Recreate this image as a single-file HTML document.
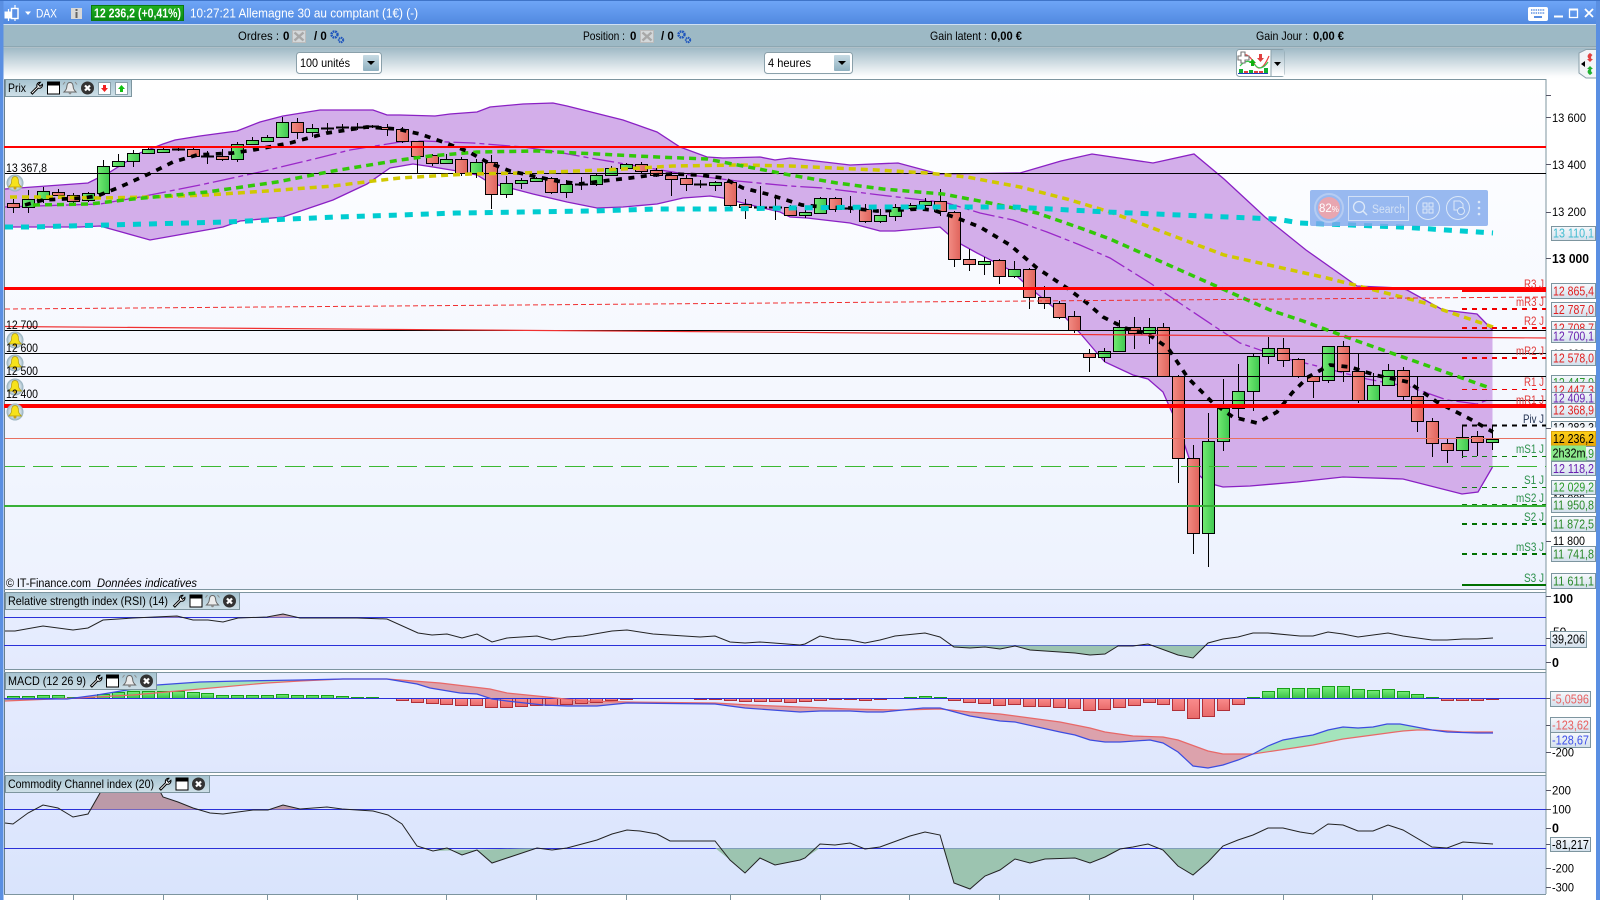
<!DOCTYPE html>
<html><head><meta charset="utf-8"><title>DAX</title>
<style>
html,body{margin:0;padding:0;background:#fff;width:1600px;height:900px;overflow:hidden}
svg{display:block;font-family:"Liberation Sans",sans-serif}
text{font-size:12px;fill:#000}
.c rect{width:12px;stroke:#000;stroke-width:1}
.h rect{width:12px;stroke-width:1}
.pl{stroke:#7d959f;stroke-width:1;fill:url(#lab)}
.r{fill:#e03838}.g{fill:#2a8f4a}
.v{font-size:12.5px}
</style></head><body>
<svg width="1600" height="900" viewBox="0 0 1600 900" xmlns="http://www.w3.org/2000/svg">
<defs>
<linearGradient id="hd" x1="0" y1="0" x2="0" y2="1"><stop offset="0" stop-color="#6fa6f8"/><stop offset="1" stop-color="#5088de"/></linearGradient>
<linearGradient id="tb" x1="0" y1="0" x2="0" y2="1"><stop offset="0" stop-color="#a0bac6"/><stop offset=".9" stop-color="#fbfcfd"/><stop offset="1" stop-color="#fff"/></linearGradient>
<linearGradient id="mn" x1="0" y1="0" x2="0" y2="1"><stop offset="0" stop-color="#fff"/><stop offset="1" stop-color="#edf2fe"/></linearGradient>
<linearGradient id="rs" x1="0" y1="0" x2="0" y2="1"><stop offset="0" stop-color="#e8eeff"/><stop offset="1" stop-color="#e3eafd"/></linearGradient>
<linearGradient id="mc" x1="0" y1="0" x2="0" y2="1"><stop offset="0" stop-color="#e6ecfe"/><stop offset="1" stop-color="#dfe7fd"/></linearGradient>
<linearGradient id="cc" x1="0" y1="0" x2="0" y2="1"><stop offset="0" stop-color="#e0e8fe"/><stop offset="1" stop-color="#d9e4fc"/></linearGradient>
<linearGradient id="gc"><stop offset="0" stop-color="#72ea72"/><stop offset="1" stop-color="#40c850"/></linearGradient>
<linearGradient id="rc"><stop offset="0" stop-color="#f28c84"/><stop offset="1" stop-color="#e0645c"/></linearGradient>
<linearGradient id="gb" x1="0" y1="0" x2="0" y2="1"><stop offset="0" stop-color="#78ee78"/><stop offset="1" stop-color="#38c048"/></linearGradient>
<linearGradient id="rb" x1="0" y1="0" x2="0" y2="1"><stop offset="0" stop-color="#fa8c8c"/><stop offset="1" stop-color="#e86a6a"/></linearGradient>
<linearGradient id="lab" x1="0" y1="0" x2="0" y2="1"><stop offset="0" stop-color="#f6f9fc"/><stop offset="1" stop-color="#d3e0ec"/></linearGradient>
<linearGradient id="bar" x1="0" y1="0" x2="0" y2="1"><stop offset="0" stop-color="#a6c3d0"/><stop offset="1" stop-color="#cfe0e8"/></linearGradient>
<linearGradient id="btn" x1="0" y1="0" x2="0" y2="1"><stop offset="0" stop-color="#c8dbe4"/><stop offset="1" stop-color="#8eb0c0"/></linearGradient>
<linearGradient id="yl" x1="0" y1="0" x2="0" y2="1"><stop offset="0" stop-color="#ffd21a"/><stop offset="1" stop-color="#e8a806"/></linearGradient>
<radialGradient id="bl"><stop offset="0" stop-color="#f4f8fa"/><stop offset=".7" stop-color="#c8d8e0"/><stop offset="1" stop-color="#90acba"/></radialGradient>
<linearGradient id="gr" x1="0" y1="0" x2="0" y2="1"><stop offset="0" stop-color="#22b022"/><stop offset="1" stop-color="#078a10"/></linearGradient>
<symbol id="bell" overflow="visible"><circle r="8.5" fill="url(#bl)"/><path d="M0-6.5C-3-6.5-3.5-3.5-3.5-1-3.5 1.5-5 2.5-6.5 4H6.5C5 2.5 3.5 1.5 3.5-1 3.5-3.5 3-6.5 0-6.5Z" fill="#f6e21a" stroke="#b09a10" stroke-width=".7"/><circle cy="5" r="1.5" fill="#c8a010"/></symbol>
<symbol id="w" overflow="visible"><path d="M1 11.2 7 5.2C6.3 3 7.8 .6 10.4 .8L8.4 3 10 4.8 12.4 2.8C12.8 5.4 10.6 7.4 8.2 6.6L2.4 12.6Z" fill="#fff" stroke="#000" stroke-width="1"/></symbol>
<symbol id="n" overflow="visible"><rect x=".5" y=".5" width="12" height="12" fill="#fff" stroke="#000"/><rect x="1" y="1" width="11" height="3" fill="#000"/></symbol>
<symbol id="k" overflow="visible"><path d="M6.5 1C3.5 1 3.5 4 3.2 6 3 8 2 9 .5 10.5H12.500C11 9 10 8 9.800 6 9.500 4 9.500 1 6.500 1Z" fill="#ececec" stroke="#666"/><circle cx="6.500" cy="11.500" r="1.300" fill="#888"/><path d="M-.5 3 1.500 .5M13.500 3 11.500 .5" stroke="#888" fill="none"/></symbol>
<symbol id="x" overflow="visible"><circle cx="6.5" cy="6.5" r="6.5" fill="#333"/><path d="M4 4 9 9M9 4 4 9" stroke="#fff" stroke-width="2.2"/></symbol>
<symbol id="gear" overflow="visible"><circle cx="4.5" cy="4.5" r="3" fill="none" stroke="#1f55bd" stroke-width="2.4" stroke-dasharray="1.7 .7"/><circle cx="11" cy="10" r="2.2" fill="none" stroke="#1f55bd" stroke-width="2" stroke-dasharray="1.4 .6"/></symbol>
<symbol id="o" overflow="visible"><rect width="13" height="12" fill="#d4d8da" stroke="#bbb"/><path d="M2 2 11 10M11 2 2 10" stroke="#a8a8a8" stroke-width="2.4"/></symbol>
<clipPath id="r1"><rect x="4" y="593" width="1542" height="24.5"/></clipPath>
<clipPath id="r2"><rect x="4" y="645.5" width="1542" height="24"/></clipPath>
<clipPath id="c1"><rect x="4" y="776" width="1542" height="33.5"/></clipPath>
<clipPath id="c2"><rect x="4" y="848.3" width="1542" height="46"/></clipPath>
</defs>

<rect width="1600" height="900" fill="#fff"/>
<rect width="1600" height="25" fill="url(#hd)"/>
<rect y="24" width="1600" height="1" fill="#cfe0f4"/>
<rect y="25" width="1600" height="22" fill="#9db9c5"/>
<rect y="46.5" width="1600" height="1" fill="#7d959f"/>
<rect y="47.5" width="1600" height="1" fill="#e2ecf0"/>
<rect y="48" width="1600" height="31" fill="url(#tb)"/>
<rect x="0" y="0" width="3.5" height="900" fill="#5a8fe2"/>
<rect x="1596" y="0" width="4" height="900" fill="#5a8fe2"/>
<rect x="0" y="0" width="1600" height="1" fill="#3f74c8"/>

<path d="M8.500 9V21M15 5V21" stroke="#fff" stroke-width="1.2" fill="none"/>
<rect x="4.500" y="11.500" width="7.500" height="7" fill="#fff"/>
<rect x="11.500" y="8.500" width="6.500" height="10" fill="#5a90e4" stroke="#fff" stroke-width="1.4"/>
<path d="M25 11.500H31L28 15Z" fill="#fff"/>
<text x="36" y="17.500" textLength="21" lengthAdjust="spacingAndGlyphs" style="fill:#fff;font-size:12px">DAX</text>
<rect x="71" y="8" width="11" height="11" fill="#d8d8d8"/>
<rect x="75.500" y="9" width="2" height="2" fill="#666"/><rect x="75.500" y="12" width="2" height="6" fill="#666"/>
<rect x="91.500" y="5.500" width="92" height="15" fill="url(#gr)" stroke="#0b7a10"/>
<text x="94" y="17.500" textLength="87" lengthAdjust="spacingAndGlyphs" style="fill:#fff;font-size:12.500px;font-weight:bold">12 236,2 (+0,41%)</text>
<text x="190" y="17.500" textLength="228" lengthAdjust="spacingAndGlyphs" style="fill:#fff;font-size:12.500px">10:27:21 Allemagne 30 au comptant (1€) (-)</text>
<rect x="1528" y="7" width="20" height="14" rx="2" fill="#fff"/>
<path d="M1531 10h14M1531 13h14" stroke="#5a8fe2" stroke-width="1.400" stroke-dasharray="1.400 .9"/><rect x="1534" y="16" width="8" height="2" fill="#5a8fe2"/>
<rect x="1554" y="15.500" width="9" height="2" fill="#fff"/>
<rect x="1569.500" y="9.500" width="8" height="8" fill="none" stroke="#fff" stroke-width="1.300"/><rect x="1569" y="8.500" width="9" height="2" fill="#fff"/>
<path d="M1585 9 1593 17M1593 9 1585 17" stroke="#fff" stroke-width="1.800"/>

<text x="238" y="40" textLength="41" lengthAdjust="spacingAndGlyphs">Ordres :</text><text x="283" y="40" style="font-weight:bold;font-size:11.500px">0</text>
<use href="#o" x="292.500" y="30.500"/><text x="314" y="40" style="font-weight:bold;font-size:11.500px">/ 0</text><use href="#gear" x="330" y="30"/>
<text x="583" y="40" textLength="42" lengthAdjust="spacingAndGlyphs">Position :</text><text x="630" y="40" style="font-weight:bold;font-size:11.500px">0</text>
<use href="#o" x="640.500" y="30.500"/><text x="661" y="40" style="font-weight:bold;font-size:11.500px">/ 0</text><use href="#gear" x="677" y="30"/>
<text x="930" y="40" textLength="57" lengthAdjust="spacingAndGlyphs">Gain latent :</text><text x="991" y="40" style="font-weight:bold;font-size:11.500px" textLength="31" lengthAdjust="spacingAndGlyphs">0,00 €</text>
<text x="1256" y="40" textLength="52" lengthAdjust="spacingAndGlyphs">Gain Jour :</text><text x="1313" y="40" style="font-weight:bold;font-size:11.500px" textLength="31" lengthAdjust="spacingAndGlyphs">0,00 €</text>

<rect x="296.500" y="52.500" width="85" height="21" rx="3" fill="#fff" stroke="#8aa0aa"/>
<text x="300" y="67" textLength="50" lengthAdjust="spacingAndGlyphs">100 unités</text>
<rect x="363" y="55" width="16" height="16" rx="1" fill="url(#btn)"/><path d="M367 61H375L371 65Z" fill="#000"/>
<rect x="764.500" y="52.500" width="88" height="21" rx="3" fill="#fff" stroke="#8aa0aa"/>
<text x="768" y="67" textLength="43" lengthAdjust="spacingAndGlyphs">4 heures</text>
<rect x="834" y="55" width="16" height="16" rx="1" fill="url(#btn)"/><path d="M838 61H846L842 65Z" fill="#000"/>

<rect x="1236.500" y="49.500" width="48" height="27" rx="3" fill="#fff" stroke="#8aa0aa"/>
<rect x="1271" y="50" width="13.500" height="26" fill="url(#tb)"/>
<path d="M1271 50V76" stroke="#8aa0aa"/>
<path d="M1274 62H1281L1277.500 66Z" fill="#000"/>
<path d="M1238 60C1245 50 1250 56 1254 63 1258 71 1263 70 1269 56" fill="none" stroke="#e84040" stroke-width="1.200"/>
<path d="M1240 66C1245 60 1250 60 1255 65 1259 70 1264 68 1268 62" fill="none" stroke="#3cc850" stroke-width="1.200"/>
<path d="M1241 52h4v4h4v4h-4v3h-4v-3h-3v-4h3z" fill="#fff" stroke="#777" stroke-width="1.100"/>
<path d="M1248 66h3v-3h-2l3.500-4 3.500 4h-2v3z" fill="#10b010"/><path d="M1259 54h3v4h2l-3.500 4-3.500-4h2z" fill="#e04040"/>
<path d="M1239 69h4v4h-4zM1249 70h4v3h-4zM1264 68h4v5h-4z" fill="#10b030"/><path d="M1244 71h4v2h-4zM1254 71h4v2h-4zM1259 71h4v2h-4z" fill="#e04040"/>
<path d="M1238 73.500H1268" stroke="#2040c0"/>
<path d="M1596 49.500H1586L1579 53V73L1586 78H1596" fill="#f2f5f7" stroke="#8aa0aa"/>
<path d="M1581 64l4-3v6Z" fill="#000"/>
<path d="M1590 53c-3 2-3 4-1 6l-2 0 3 3 3-3-1.500 0c-1-2 0-3 1-4" fill="#e04040"/><path d="M1590 75c-3-2-3-4-1-6l-2 0 3-3 3 3-1.500 0c-1 2 0 3 1 4" fill="#20b030"/>

<rect x="4" y="79" width="1542" height="510" fill="url(#mn)"/>
<rect x="4" y="593" width="1542" height="76" fill="url(#rs)"/>
<rect x="4" y="673" width="1542" height="99" fill="url(#mc)"/>
<rect x="4" y="776" width="1542" height="118" fill="url(#cc)"/>
<rect x="4" y="79" width="1" height="815" fill="#6a7f8a"/>
<path d="M4 79.500H1546V894M4 589.500H1546M4 592.500H1546M4 669.500H1546M4 672.500H1546M4 772.500H1546M4 775.500H1546M4 894.500H1546" fill="none" stroke="#7d959f"/>

<polygon fill="#d3aeea" stroke="none" points="5,189 88,183 110,172 140,153 163,144 175,140 200,136 237,131 260,122 283,116 320,110 373,110 387,115 400,115 435,116 450,114 477,112 490,107 523,104 553,103 567,106 583,110 623,120 657,132 680,147 707,157 723,158 760,157 775,160 790,158 850,165 898,163 939,174 1020,173 1061,161 1092,154 1153,163 1194,154 1224,179 1265,217 1306,250 1357,286 1400,288 1407,290 1443,310 1477,314 1492.500,330 1492.500,467 1478,492 1462,494 1403,479 1343,477 1297,482 1250,486 1223,487 1208,483 1193,470 1178,425 1170,408 1163,392 1148,379 1133,375 1105,362 1097,353 1080,333 1063,315 1030,288 1010,270 977,253 957,242 940,227 895,231 880,231 850,223 807,218 790,217 780,212 763,208 723,198 710,196 683,198 657,204 623,207 597,208 567,202 533,194 510,188 490,183 477,175 457,171 433,167 413,164 390,168 367,184 333,200 283,217 240,221 223,227 150,240 100,226 80,227 5,227"/>
<polyline fill="none" stroke="#8a20c4" stroke-width="1.300" points="5,189 88,183 110,172 140,153 163,144 175,140 200,136 237,131 260,122 283,116 320,110 373,110 387,115 400,115 435,116 450,114 477,112 490,107 523,104 553,103 567,106 583,110 623,120 657,132 680,147 707,157 723,158 760,157 775,160 790,158 850,165 898,163 939,174 1020,173 1061,161 1092,154 1153,163 1194,154 1224,179 1265,217 1306,250 1357,286 1400,288 1407,290 1443,310 1477,314 1492.500,330"/>
<polyline fill="none" stroke="#8a20c4" stroke-width="1.300" points="5,227 80,227 100,226 150,240 223,227 240,221 283,217 333,200 367,184 390,168 413,164 433,167 457,171 477,175 490,183 510,188 533,194 567,202 597,208 623,207 657,204 683,198 710,196 723,198 763,208 780,212 790,217 807,218 850,223 880,231 895,231 940,227 957,242 977,253 1010,270 1030,288 1063,315 1080,333 1097,353 1105,362 1133,375 1148,379 1163,392 1170,408 1178,425 1193,470 1208,483 1223,487 1250,486 1297,482 1343,477 1403,479 1462,494 1478,492 1492.500,467"/>
<polyline fill="none" stroke="#9a28c8" stroke-width="1.300" stroke-dasharray="22 4 5 4" points="5,207 100,204 140,197 200,185 260,172 310,160 350,150 400,142 423,141 473,143 523,147 557,152 590,158 643,167 690,175 737,181 790,186 823,188 880,195 923,200 947,203 980,213 1013,220 1047,232 1080,245 1110,258 1150,283 1190,310 1217,328 1240,343 1280,357 1313,365 1367,379 1410,387 1447,400 1477,404 1490,399"/>

<path stroke="#000" fill="none" d="M13.500 199V213M28.500 190V213M43.500 187V203M58.500 189V199M73.500 193V203M88.500 192V202M103.500 160V194M118.500 154V167M133.500 150V167M148.500 147V153M163.500 147V152M178.500 148V151M193.500 147V157M207.500 151V164M222.500 149V161M237.500 142V162M252.500 137V144M267.500 135V142M282.500 117V138M297.500 118V139M312.500 124V137M327.500 123V133M342.500 124V132M357.500 123V130M372.500 125V128M387.500 124V136M402.500 127V143M417.500 141V173M432.500 154V166M446.500 154V164M461.500 157V176M476.500 159V178M491.500 155V209M506.500 176V198M521.500 178V189M536.500 177V182M551.500 177V194M566.500 180V198M581.500 177V190M596.500 174V186M611.500 166V176M626.500 163V169M641.500 162V173M656.500 168V177M671.500 172V196M686.500 175V191M700.500 180V188M715.500 181V191M730.500 181V209M745.500 199V219M760.500 186V208M775.500 195V220M790.500 205V216M805.500 210V218M820.500 197V213M835.500 197V212M850.500 196V213M865.500 204V223M880.500 209V223M895.500 204V221M910.500 203V210M925.500 198V210M940.500 189V216M954.500 211V267M969.500 249V271M984.500 257V275M999.500 259V284M1014.500 261V278M1029.500 268V309M1044.500 286V309M1059.500 301V319M1074.500 311V333M1089.500 349V372M1104.500 348V362M1119.500 320V352M1134.500 317V349M1149.500 318V344M1163.500 323V376M1178.500 375V483M1193.500 445V554M1208.500 413V567M1223.500 379V451M1238.500 364V418M1253.500 353V411M1268.500 337V364M1283.500 338V367M1298.500 358V378M1313.500 376V398M1328.500 346V383M1343.500 341V382M1358.500 353V403M1373.500 373V400M1388.500 364V385M1403.500 367V400M1417.500 377V432M1432.500 418V457M1447.500 439V463M1462.500 426V458M1477.500 431V456M1492.500 425V450"/>
<path stroke="#000" stroke-width="2" fill="none" d="M172 149.500h13M201 156.500h13M321 128.500h13M336 127.500h13M351 127.500h13M366 126.500h13M575 184.500h13M694 184.500h13M754 207.500h13M769 207.500h13M844 208.500h13"/>

<g class="c" fill="url(#gc)">
<rect x="22.500" y="199.500" height="8"/><rect x="37.500" y="191.500" height="8"/><rect x="82.500" y="193.500" height="7"/><rect x="97.500" y="166.500" height="27"/><rect x="112.500" y="161.500" height="5"/><rect x="127.500" y="153.500" height="8"/><rect x="142.500" y="149.500" height="4"/><rect x="157.500" y="149.500" height="3"/><rect x="231.500" y="144.500" height="15"/><rect x="246.500" y="140.500" height="4"/><rect x="261.500" y="137.500" height="4"/><rect x="276.500" y="122.500" height="15"/><rect x="306.500" y="128.500" height="4"/><rect x="440.500" y="159.500" height="4"/><rect x="470.500" y="162.500" height="11"/><rect x="500.500" y="183.500" height="11"/><rect x="515.500" y="180.500" height="3"/><rect x="530.500" y="178.500" height="3"/><rect x="560.500" y="184.500" height="8"/><rect x="590.500" y="175.500" height="9"/><rect x="605.500" y="168.500" height="7"/><rect x="620.500" y="164.500" height="4"/><rect x="709.500" y="182.500" height="3"/><rect x="799.500" y="212.500" height="3"/><rect x="814.500" y="198.500" height="15"/><rect x="874.500" y="215.500" height="6"/><rect x="889.500" y="207.500" height="9"/><rect x="904.500" y="205.500" height="3"/><rect x="919.500" y="201.500" height="4"/><rect x="978.500" y="261.500" height="3"/><rect x="1008.500" y="269.500" height="7"/><rect x="1098.500" y="351.500" height="6"/><rect x="1113.500" y="327.500" height="24"/><rect x="1143.500" y="327.500" height="6"/><rect x="1202.500" y="441.500" height="92"/><rect x="1217.500" y="408.500" height="33"/><rect x="1232.500" y="391.500" height="17"/><rect x="1247.500" y="356.500" height="35"/><rect x="1262.500" y="348.500" height="8"/><rect x="1322.500" y="346.500" height="34"/><rect x="1367.500" y="385.500" height="15"/><rect x="1382.500" y="370.500" height="15"/><rect x="1456.500" y="437.500" height="13"/><rect x="1486.500" y="439.500" height="3"/>
</g>
<g class="c" fill="url(#rc)">
<rect x="7.500" y="203.500" height="4"/><rect x="52.500" y="192.500" height="3"/><rect x="67.500" y="195.500" height="6"/><rect x="187.500" y="149.500" height="7"/><rect x="216.500" y="156.500" height="3"/><rect x="291.500" y="122.500" height="10"/><rect x="381.500" y="127.500" height="2"/><rect x="396.500" y="129.500" height="12"/><rect x="411.500" y="141.500" height="15"/><rect x="426.500" y="155.500" height="8"/><rect x="455.500" y="159.500" height="14"/><rect x="485.500" y="162.500" height="32"/><rect x="545.500" y="178.500" height="14"/><rect x="635.500" y="164.500" height="7"/><rect x="650.500" y="170.500" height="5"/><rect x="665.500" y="175.500" height="4"/><rect x="680.500" y="178.500" height="6"/><rect x="724.500" y="182.500" height="23"/><rect x="739.500" y="204.500" height="3"/><rect x="784.500" y="207.500" height="8"/><rect x="829.500" y="198.500" height="11"/><rect x="859.500" y="209.500" height="12"/><rect x="934.500" y="201.500" height="10"/><rect x="948.500" y="212.500" height="47"/><rect x="963.500" y="259.500" height="5"/><rect x="993.500" y="260.500" height="16"/><rect x="1023.500" y="269.500" height="28"/><rect x="1038.500" y="297.500" height="6"/><rect x="1053.500" y="303.500" height="14"/><rect x="1068.500" y="316.500" height="14"/><rect x="1083.500" y="353.500" height="4"/><rect x="1128.500" y="327.500" height="6"/><rect x="1157.500" y="327.500" height="49"/><rect x="1172.500" y="376.500" height="82"/><rect x="1187.500" y="458.500" height="75"/><rect x="1277.500" y="348.500" height="12"/><rect x="1292.500" y="359.500" height="17"/><rect x="1307.500" y="376.500" height="5"/><rect x="1337.500" y="346.500" height="25"/><rect x="1352.500" y="371.500" height="29"/><rect x="1397.500" y="370.500" height="26"/><rect x="1411.500" y="396.500" height="25"/><rect x="1426.500" y="421.500" height="22"/><rect x="1441.500" y="443.500" height="7"/><rect x="1471.500" y="436.500" height="6"/>
</g>

<path d="M5 173.500H1546M5 330.500H1546M5 353.500H1546M5 376.500H1546M5 400.500H1546" stroke="#000" stroke-width="1"/>

<polyline fill="none" stroke="#d0c800" stroke-width="3.500" stroke-dasharray="7 5" points="10,197 50,197 97,198 150,197 207,195 267,191 333,186 373,181 400,178 433,176 470,174 523,173 577,171 623,169 673,166 740,165 790,166 877,170 927,173 967,177 1020,187 1067,199 1110,212 1224,255 1327,278 1429,304 1443,310 1493,327"/>
<polyline fill="none" stroke="#32c808" stroke-width="3.500" stroke-dasharray="7 5" points="33,205 90,204 133,199 207,192 277,182 333,171 400,160 430,156 477,152 537,151 597,154 657,157 707,159 743,166 790,175 837,183 883,189 943,194 990,203 1037,213 1083,229 1110,239 1270,310 1303,321 1360,342 1417,362 1490,388"/>
<polyline fill="none" stroke="#000" stroke-width="3.700" stroke-dasharray="6 6.500" points="25,205 43,200 83,198 97,196 120,187 153,172 173,162 197,155 233,153 253,150 290,143 327,133 367,127 397,129 420,134 443,142 467,151 487,162 510,171 533,176 557,181 580,184 603,181 630,178 653,175 673,174 700,175 723,178 743,188 767,194 780,198 802,205 823,207 850,208 877,211 920,209 933,210 957,218 980,227 1010,245 1037,268 1067,288 1087,303 1103,317 1125,328 1148,334 1168,348 1188,378 1213,403 1233,417 1257,423 1277,412 1292,393 1308,377 1330,365 1350,367 1375,375 1408,382 1437,402 1470,419 1493,432"/>
<polyline fill="none" stroke="#00ccd0" stroke-width="5" stroke-dasharray="8 8" points="5,227 33,227 67,226 147,224 227,222 290,219 337,217 400,215 457,213 523,212 593,211 657,209 723,209 787,208 880,207 947,207 1013,207 1107,212 1276,219 1300,223 1400,227 1493,233"/>

<rect x="4" y="146" width="1542" height="2" fill="#ff0000"/>
<rect x="4" y="287" width="1542" height="3" fill="#ff0000"/>
<rect x="1462" y="287" width="84" height="5" fill="#ff0000"/>
<path d="M5 309 1546 297" stroke="#f03030" stroke-dasharray="5 3" fill="none"/>
<path d="M5 326.500 1546 338" stroke="#f03030" fill="none" stroke-width="1.200"/>
<rect x="4" y="404" width="1542" height="4" fill="#ff0000"/>
<path d="M5 438.500H1546" stroke="#e87060"/>
<path d="M5 466.500H1546" stroke="#3cb832" stroke-dasharray="20 8"/>
<rect x="4" y="505" width="1542" height="2" fill="#38b038"/>
<g fill="none">
<path d="M1462 309H1546M1462 328H1546M1462 358H1546" stroke="#f00000" stroke-width="2" stroke-dasharray="5 5"/>
<path d="M1462 389.500H1546" stroke="#f00000" stroke-dasharray="5 5"/>
<path d="M1462 425.500H1546" stroke="#000" stroke-width="2" stroke-dasharray="5 5"/>
<path d="M1462.500 426V437M1492.500 425V432" stroke="#000"/>
<path d="M1462 456.500H1546M1462 487.500H1546" stroke="#108010" stroke-dasharray="5 5"/>
<path d="M1462 504.500H1546" stroke="#108010" stroke-dasharray="5 5"/>
<path d="M1462 524H1546M1462 554H1546" stroke="#007000" stroke-width="2" stroke-dasharray="5 5"/>
<path d="M1462 585H1546" stroke="#007000" stroke-width="2"/>
</g>

<use href="#bell" x="15" y="183"/><use href="#bell" x="15" y="340"/><use href="#bell" x="15" y="363"/><use href="#bell" x="15" y="387"/><use href="#bell" x="15" y="412"/>
<text x="6" y="172" textLength="41" lengthAdjust="spacingAndGlyphs">13 367,8</text>
<text x="6" y="329" textLength="32" lengthAdjust="spacingAndGlyphs">12 700</text>
<text x="6" y="352" textLength="32" lengthAdjust="spacingAndGlyphs">12 600</text>
<text x="6" y="375" textLength="32" lengthAdjust="spacingAndGlyphs">12 500</text>
<text x="6" y="398" textLength="32" lengthAdjust="spacingAndGlyphs">12 400</text>
<text x="6" y="587" textLength="85" lengthAdjust="spacingAndGlyphs" style="font-size:11.500px">© IT-Finance.com</text>
<text x="97" y="587" textLength="100" lengthAdjust="spacingAndGlyphs" style="font-size:11.500px;font-style:italic">Données indicatives</text>

<text x="1524" y="288" textLength="20" lengthAdjust="spacingAndGlyphs" class="r">R3 J</text>
<text x="1516" y="306" textLength="28" lengthAdjust="spacingAndGlyphs" class="r">mR3 J</text>
<text x="1524" y="325" textLength="20" lengthAdjust="spacingAndGlyphs" class="r">R2 J</text>
<text x="1516" y="355" textLength="28" lengthAdjust="spacingAndGlyphs" class="r">mR2 J</text>
<text x="1524" y="386" textLength="20" lengthAdjust="spacingAndGlyphs" class="r">R1 J</text>
<text x="1516" y="404" textLength="28" lengthAdjust="spacingAndGlyphs" class="r">mR1 J</text>
<text x="1523" y="423" textLength="21" lengthAdjust="spacingAndGlyphs" style="fill:#203050">Piv J</text>
<text x="1516" y="453" textLength="28" lengthAdjust="spacingAndGlyphs" class="g">mS1 J</text>
<text x="1524" y="484" textLength="20" lengthAdjust="spacingAndGlyphs" class="g">S1 J</text>
<text x="1516" y="502" textLength="28" lengthAdjust="spacingAndGlyphs" class="g">mS2 J</text>
<text x="1524" y="521" textLength="20" lengthAdjust="spacingAndGlyphs" class="g">S2 J</text>
<text x="1516" y="551" textLength="28" lengthAdjust="spacingAndGlyphs" class="g">mS3 J</text>
<text x="1524" y="582" textLength="20" lengthAdjust="spacingAndGlyphs" class="g">S3 J</text>

<rect x="1310" y="190" width="178" height="36" rx="2" fill="#7fa8ec" fill-opacity=".8"/>
<circle cx="1329" cy="208" r="14" fill="none" stroke="#c8d8f4" stroke-width="2" opacity=".6"/>
<circle cx="1329" cy="208" r="11" fill="#e8a6b0"/>
<text x="1319" y="212" style="fill:#fff;font-size:11.500px">82<tspan style="font-size:8px;fill:#fff">%</tspan></text>
<rect x="1348.500" y="196.500" width="60" height="24" fill="none" stroke="#d2e0f6"/>
<circle cx="1359" cy="207" r="5.500" fill="none" stroke="#dce8f8" stroke-width="1.300"/><path d="M1363 211 1367 215" stroke="#dce8f8" stroke-width="1.500"/>
<text x="1372" y="213" textLength="33" lengthAdjust="spacingAndGlyphs" style="fill:#d4e2f6;font-size:11.500px">Search</text>
<circle cx="1428" cy="208" r="11.500" fill="none" stroke="#dce8f8"/><path d="M1423 203h4v4h-4zM1429 203h4v4h-4zM1423 209h4v4h-4zM1429 209h4v4h-4z" fill="none" stroke="#dce8f8"/>
<circle cx="1458" cy="208" r="11.500" fill="none" stroke="#dce8f8"/><path d="M1454 201h6l3 3v6h-9z" fill="none" stroke="#dce8f8"/><circle cx="1461" cy="211" r="3.500" fill="#8fb2ec" stroke="#dce8f8"/>
<circle cx="1479" cy="202" r="1.300" fill="#dce8f8"/><circle cx="1479" cy="208" r="1.300" fill="#dce8f8"/><circle cx="1479" cy="214" r="1.300" fill="#dce8f8"/>

<rect x="5.500" y="79.500" width="126" height="17" fill="url(#bar)" stroke="#7d959f"/>
<text x="8" y="92" textLength="18" lengthAdjust="spacingAndGlyphs">Prix</text>
<use href="#w" x="30" y="81.500"/><use href="#n" x="47" y="81.500"/><use href="#k" x="63.500" y="81.500"/><use href="#x" x="81" y="81.500"/>
<rect x="98.500" y="82.500" width="12" height="12" fill="#fff" stroke="#8aa0aa"/><path d="M103 85h3v3h2l-3.500 4-3.500-4h2z" fill="#f02020"/>
<rect x="115.500" y="82.500" width="12" height="12" fill="#fff" stroke="#8aa0aa"/><path d="M120 92h3v-3h2l-3.500-4-3.500 4h2z" fill="#10c010"/>

<path d="M4 617.500H1546M4 645.500H1546" stroke="#2a30d8"/>
<polygon clip-path="url(#r1)" fill="#c6a0b0" points="5,631 15,631 43,626 73,630 88,628 103,620 133,618 177,616 193,620 208,620 223,622 238,618 267,617 283,614 300,618 400,630 5,631"/>
<polygon clip-path="url(#r2)" fill="#9cc4b0" points="805,645 820,636 835,639 850,640 865,643 880,640 895,636 925,633 940,637 954,647 970,648 985,647 1000,649 1015,646 1030,650 1075,653 1090,655 1105,654 1118,646 1133,646 1148,644 1178,655 1193,658 1208,643 1208,630 805,630"/>
<polyline fill="none" stroke="#222" points="5,631 15,631 43,626 73,630 88,628 103,620 133,618 177,616 193,620 208,620 223,622 238,618 267,617 283,614 300,618 333,618 357,618 387,619 418,633 432,635 447,634 462,638 477,634 492,642 507,638 537,636 552,640 567,637 583,636 612,631 627,630 653,634 700,637 715,636 730,642 745,643 760,642 800,645 805,644 820,636 835,639 850,640 865,643 880,640 895,636 925,633 940,637 954,647 970,648 985,647 1000,649 1015,646 1030,650 1075,653 1090,655 1105,654 1118,646 1133,646 1148,644 1178,655 1193,658 1208,643 1223,639 1238,637 1253,633 1268,633 1300,636 1313,636 1328,632 1343,634 1358,637 1388,633 1403,636 1432,640 1447,640 1463,639 1477,639 1493,638"/>
<rect x="5.500" y="592.500" width="234" height="17" fill="url(#bar)" stroke="#7d959f"/>
<text x="8" y="605" textLength="160" lengthAdjust="spacingAndGlyphs">Relative strength index (RSI) (14)</text>
<use href="#w" x="172.500" y="594.500"/><use href="#n" x="189.500" y="594.500"/><use href="#k" x="206" y="594.500"/><use href="#x" x="223" y="594.500"/>

<polygon fill="#a4e4bc" points="5,699 67,699 97,695 127,690 157,685 200,682 240,681 300,680 343,679 343,679 300,681 267,683 200,689 133,695 77,698 5,701"/>
<polygon fill="#dca2ac" points="387,679 417,684 430,688 460,693 477,694 492,699 507,701 543,705 567,706 597,706 627,703 715,704 745,708 800,712 820,711 850,711 867,712 883,712 923,708 940,708 970,716 1000,721 1015,722 1060,732 1075,735 1090,740 1105,742 1120,742 1150,740 1163,743 1178,752 1193,766 1208,768 1223,765 1238,760 1253,754 1223,754 1208,751 1178,740 1163,737 1133,736 1105,732 1090,728 1060,722 1000,714 970,712 940,709 900,710 850,709 800,707 750,705 715,703 627,702 583,701 547,697 507,693 490,689 440,683"/>
<polygon fill="#a4e4bc" points="1253,754 1268,746 1283,740 1300,737 1313,735 1328,730 1343,727 1358,728 1373,727 1387,724 1400,724 1425,729 1403,731 1373,735 1343,739 1313,745 1300,747"/>
<g class="h" stroke="#18a018" fill="url(#gb)">
<rect x="7.500" y="696.500" height="2"/><rect x="22.500" y="696.500" height="2"/><rect x="37.500" y="695.500" height="3"/><rect x="52.500" y="695.500" height="3"/><rect x="67.500" y="697.500" height="1"/><rect x="82.500" y="697.500" height="1"/><rect x="97.500" y="694.500" height="4"/><rect x="112.500" y="692.500" height="6"/><rect x="127.500" y="691.500" height="7"/><rect x="142.500" y="691.500" height="7"/><rect x="157.500" y="691.500" height="7"/><rect x="172.500" y="691.500" height="7"/><rect x="187.500" y="692.500" height="6"/><rect x="201.500" y="693.500" height="5"/><rect x="216.500" y="695.500" height="3"/><rect x="231.500" y="695.500" height="3"/><rect x="246.500" y="695.500" height="3"/><rect x="261.500" y="695.500" height="3"/><rect x="276.500" y="694.500" height="4"/><rect x="291.500" y="695.500" height="3"/><rect x="306.500" y="695.500" height="3"/><rect x="321.500" y="695.500" height="3"/><rect x="336.500" y="696.500" height="2"/><rect x="351.500" y="697.500" height="1"/><rect x="366.500" y="697.500" height="1"/>
<rect x="904.500" y="697.500" height="1"/><rect x="919.500" y="696.500" height="2"/><rect x="934.500" y="697.500" height="1"/>
<rect x="1247.500" y="697.500" height="1"/><rect x="1262.500" y="691.500" height="7"/><rect x="1277.500" y="688.500" height="10"/><rect x="1292.500" y="688.500" height="10"/><rect x="1307.500" y="688.500" height="10"/><rect x="1322.500" y="686.500" height="12"/><rect x="1337.500" y="686.500" height="12"/><rect x="1352.500" y="689.500" height="9"/><rect x="1367.500" y="690.500" height="8"/><rect x="1382.500" y="689.500" height="9"/><rect x="1397.500" y="691.500" height="7"/><rect x="1411.500" y="694.500" height="4"/><rect x="1426.500" y="697.500" height="1"/>
</g>
<g class="h" stroke="#b03038" fill="url(#rb)">
<rect x="396.500" y="698.500" height="2"/><rect x="411.500" y="698.500" height="4"/><rect x="426.500" y="698.500" height="5"/><rect x="440.500" y="698.500" height="6"/><rect x="455.500" y="698.500" height="7"/><rect x="470.500" y="698.500" height="7"/><rect x="485.500" y="698.500" height="9"/><rect x="500.500" y="698.500" height="9"/><rect x="515.500" y="698.500" height="8"/><rect x="530.500" y="698.500" height="7"/><rect x="545.500" y="698.500" height="7"/><rect x="560.500" y="698.500" height="6"/><rect x="575.500" y="698.500" height="5"/><rect x="590.500" y="698.500" height="4"/><rect x="605.500" y="698.500" height="2"/><rect x="620.500" y="698.500" height="1"/>
<rect x="694.500" y="698.500" height="1"/><rect x="709.500" y="698.500" height="1"/><rect x="724.500" y="698.500" height="2"/><rect x="739.500" y="698.500" height="3"/><rect x="754.500" y="698.500" height="3"/><rect x="769.500" y="698.500" height="3"/><rect x="784.500" y="698.500" height="4"/><rect x="799.500" y="698.500" height="3"/><rect x="814.500" y="698.500" height="2"/><rect x="829.500" y="698.500" height="1"/><rect x="844.500" y="698.500" height="1"/><rect x="859.500" y="698.500" height="2"/><rect x="874.500" y="698.500" height="1"/>
<rect x="948.500" y="698.500" height="2"/><rect x="963.500" y="698.500" height="4"/><rect x="978.500" y="698.500" height="5"/><rect x="993.500" y="698.500" height="7"/><rect x="1008.500" y="698.500" height="6"/><rect x="1023.500" y="698.500" height="8"/><rect x="1038.500" y="698.500" height="8"/><rect x="1053.500" y="698.500" height="9"/><rect x="1068.500" y="698.500" height="10"/><rect x="1083.500" y="698.500" height="12"/><rect x="1098.500" y="698.500" height="11"/><rect x="1113.500" y="698.500" height="9"/><rect x="1128.500" y="698.500" height="7"/><rect x="1143.500" y="698.500" height="4"/><rect x="1157.500" y="698.500" height="6"/><rect x="1172.500" y="698.500" height="12"/><rect x="1187.500" y="698.500" height="20"/><rect x="1202.500" y="698.500" height="18"/><rect x="1217.500" y="698.500" height="12"/><rect x="1232.500" y="698.500" height="6"/>
<rect x="1441.500" y="698.500" height="2"/><rect x="1456.500" y="698.500" height="2"/><rect x="1471.500" y="698.500" height="2"/><rect x="1486.500" y="698.500" height="1"/>
</g>
<path d="M4 698.500H1546" stroke="#2a30d8"/>
<polyline fill="none" stroke="#e86868" stroke-width="1.200" points="5,701 77,698 133,695 200,689 267,683 300,681 343,679 387,679 440,683 490,689 507,693 547,697 583,701 627,702 715,703 750,705 800,707 850,709 900,710 940,709 970,712 1000,714 1060,722 1090,728 1105,732 1133,736 1163,737 1178,740 1208,751 1223,754 1253,754 1300,747 1313,745 1343,739 1373,735 1403,731 1417,730 1433,730 1463,732 1493,732"/>
<polyline fill="none" stroke="#3c4ce0" stroke-width="1.200" points="5,699 67,699 97,695 127,690 157,685 200,682 240,681 300,680 343,679 387,679 417,684 430,688 460,693 477,694 492,699 507,701 543,705 567,706 597,706 627,703 715,704 745,708 800,712 820,711 850,711 867,712 883,712 923,708 940,708 970,716 1000,721 1015,722 1060,732 1075,735 1090,740 1105,742 1120,742 1150,740 1163,743 1178,752 1193,766 1208,768 1223,765 1238,760 1253,754 1268,746 1283,740 1300,737 1313,735 1328,730 1343,727 1358,728 1373,727 1387,724 1400,724 1432,730 1447,732 1477,733 1493,733"/>
<rect x="5.500" y="672.500" width="151" height="17" fill="url(#bar)" stroke="#7d959f"/>
<text x="8" y="685" textLength="78" lengthAdjust="spacingAndGlyphs">MACD (12 26 9)</text>
<use href="#w" x="89.500" y="674.500"/><use href="#n" x="106" y="674.500"/><use href="#k" x="123" y="674.500"/><use href="#x" x="140" y="674.500"/>

<path d="M4 809.500H1546M4 848.500H1546" stroke="#2a30d8"/>
<polygon clip-path="url(#c1)" fill="#bc9aa8" points="88,814 100,793 106,776 152,776 163,797 178,802 193,808 210,813 88,813"/>
<polygon clip-path="url(#c1)" fill="#bc9aa8" points="268,810 283,805 300,809"/>
<g clip-path="url(#c2)">
<polygon fill="#9cc4b0" points="433,851 447,848 462,855 477,850 492,863 507,858 537,848"/>
<polygon fill="#9cc4b0" points="715,848 730,860 745,873 760,858 775,865 800,860 805,858 820,848"/>
<polygon fill="#9cc4b0" points="943,848 954,883 970,889 985,876 1000,870 1015,859 1030,863 1045,859 1075,858 1090,863 1105,857 1120,849 1122,848"/>
<polygon fill="#9cc4b0" points="1160,848 1163,850 1178,866 1193,875 1208,862 1223,846"/>
</g>
<polyline fill="none" stroke="#222" points="5,823 13,824 28,813 43,805 58,808 73,817 88,814 100,793 106,776 152,776 163,797 178,802 193,808 210,813 223,814 253,810 268,810 283,805 300,809 327,807 342,809 373,811 388,815 402,824 417,846 433,851 447,848 462,855 477,850 492,863 507,858 537,848 552,850 567,848 597,840 612,834 627,830 640,831 657,834 670,841 715,841 730,860 745,873 760,858 775,865 800,860 805,858 820,844 835,845 850,843 865,849 880,847 910,836 925,832 940,835 954,883 970,889 985,876 1000,870 1015,859 1030,863 1045,859 1075,858 1090,863 1105,857 1120,849 1133,847 1148,844 1163,850 1178,866 1193,875 1208,862 1223,846 1238,840 1253,835 1268,828 1283,828 1300,832 1313,834 1328,824 1343,825 1358,831 1373,831 1388,825 1403,830 1432,847 1447,848 1463,842 1493,844"/>
<rect x="5.500" y="775.500" width="204" height="17" fill="url(#bar)" stroke="#7d959f"/>
<text x="8" y="788" textLength="146" lengthAdjust="spacingAndGlyphs">Commodity Channel index (20)</text>
<use href="#w" x="158.500" y="777.500"/><use href="#n" x="175.500" y="777.500"/><use href="#x" x="192" y="777.500"/>

<path stroke="#7d959f" fill="none" d="M73.500 894V900M163.500 894V900M267.500 894V900M357.500 894V900M446.500 894V900M536.500 894V900M626.500 894V900M730.500 894V900M820.500 894V900M909.500 894V900M999.500 894V900M1089.500 894V900M1193.500 894V900M1283.500 894V900M1372.500 894V900M1462.500 894V900"/>

<path stroke="#556" fill="none" d="M1546 95.500h5M1546 117.500h5M1546 164.500h5M1546 212.500h5M1546 258.500h5M1546 428.500h5M1546 541.500h5M1546 596.500h5M1546 638.500h5M1546 662.500h5M1546 698.500h5M1546 725.500h5M1546 752.500h5M1546 790.500h5M1546 809.500h5M1546 828.500h5M1546 844.500h5M1546 868.500h5M1546 887.500h5"/>

<text x="1552" y="122" textLength="34" lengthAdjust="spacingAndGlyphs">13 600</text>
<text x="1552" y="169" textLength="34" lengthAdjust="spacingAndGlyphs">13 400</text>
<text x="1552" y="216" textLength="34" lengthAdjust="spacingAndGlyphs">13 200</text>
<text x="1552" y="263" textLength="37" lengthAdjust="spacingAndGlyphs" style="font-weight:bold;font-size:12.500px">13 000</text>
<text x="1553" y="545" textLength="32" lengthAdjust="spacingAndGlyphs">11 800</text>
<text x="1553" y="358" textLength="32" lengthAdjust="spacingAndGlyphs">12 600</text>
<text x="1553" y="503" textLength="32" lengthAdjust="spacingAndGlyphs">12 000</text>

<rect class="pl" x="1551.500" y="226.500" width="44" height="14"/><text x="1553" y="237.500" textLength="41" lengthAdjust="spacingAndGlyphs" class="v" style="fill:#42bcd0">13 110,1</text>
<rect class="pl" x="1551.500" y="283.500" width="44" height="15"/><text x="1553" y="295.500" textLength="41" lengthAdjust="spacingAndGlyphs" class="v" style="fill:#e02020">12 865,4</text>
<rect class="pl" x="1551.500" y="302.500" width="44" height="14"/><text x="1553" y="314" textLength="41" lengthAdjust="spacingAndGlyphs" class="v" style="fill:#e02020">12 787,0</text>
<rect class="pl" x="1551.500" y="321.500" width="44" height="14"/><text x="1553" y="332.500" textLength="41" lengthAdjust="spacingAndGlyphs" class="v" style="fill:#e02020">12 708,7</text>
<rect class="pl" x="1551.500" y="329.500" width="44" height="13"/><text x="1553" y="340.500" textLength="41" lengthAdjust="spacingAndGlyphs" class="v" style="fill:#6a20b0">12 700,1</text>
<rect class="pl" x="1551.500" y="350.500" width="44" height="15"/><text x="1553" y="362.500" textLength="41" lengthAdjust="spacingAndGlyphs" class="v" style="fill:#e02020">12 578,0</text>
<rect class="pl" x="1551.500" y="375.500" width="44" height="14"/><text x="1553" y="387" textLength="41" lengthAdjust="spacingAndGlyphs" class="v" style="fill:#2a9a2a">12 447,9</text>
<rect class="pl" x="1551.500" y="382.500" width="44" height="14"/><text x="1553" y="394.500" textLength="41" lengthAdjust="spacingAndGlyphs" class="v" style="fill:#e02020">12 447,3</text>
<rect class="pl" x="1551.500" y="392.500" width="44" height="11"/><text x="1553" y="402.500" textLength="41" lengthAdjust="spacingAndGlyphs" class="v" style="fill:#6a20b0">12 409,1</text>
<rect class="pl" x="1551.500" y="403.500" width="44" height="14"/><text x="1553" y="414.500" textLength="41" lengthAdjust="spacingAndGlyphs" class="v" style="fill:#e02020">12 368,9</text>
<rect class="pl" x="1551.500" y="421.500" width="44" height="14"/><text x="1553" y="432" textLength="41" lengthAdjust="spacingAndGlyphs" class="v">12 283,3</text>
<rect x="1547" y="427.500" width="49" height="4" fill="#fff"/><path d="M1546 428.500h5" stroke="#556"/>
<rect x="1551.500" y="431.500" width="44" height="14" fill="url(#yl)" stroke="#d8a010"/><text x="1553" y="443" textLength="41" lengthAdjust="spacingAndGlyphs" class="v">12 236,2</text>
<rect class="pl" x="1551.500" y="446.500" width="44" height="14"/><text x="1553" y="458" textLength="41" lengthAdjust="spacingAndGlyphs" class="v" style="fill:#2a9a2a">12 158,9</text>
<rect x="1551" y="445.500" width="35" height="15" fill="#8ce88c"/><text x="1552.500" y="457.500" textLength="33" lengthAdjust="spacingAndGlyphs" class="v">2h32m</text>
<rect class="pl" x="1551.500" y="461.500" width="44" height="14"/><text x="1553" y="473" textLength="41" lengthAdjust="spacingAndGlyphs" class="v" style="fill:#6a20b0">12 118,2</text>
<rect class="pl" x="1551.500" y="480.500" width="44" height="14"/><text x="1553" y="491.500" textLength="41" lengthAdjust="spacingAndGlyphs" class="v" style="fill:#2a9a2a">12 029,2</text>
<rect class="pl" x="1551.500" y="497.500" width="44" height="15"/><text x="1553" y="509.500" textLength="41" lengthAdjust="spacingAndGlyphs" class="v" style="fill:#2a8a2a">11 950,8</text>
<rect class="pl" x="1551.500" y="516.500" width="44" height="15"/><text x="1553" y="528.500" textLength="41" lengthAdjust="spacingAndGlyphs" class="v" style="fill:#2a8a2a">11 872,5</text>
<rect class="pl" x="1551.500" y="546.500" width="44" height="15"/><text x="1553" y="558.500" textLength="41" lengthAdjust="spacingAndGlyphs" class="v" style="fill:#2a8a2a">11 741,8</text>
<rect class="pl" x="1551.500" y="573.500" width="44" height="15"/><text x="1553" y="585.500" textLength="41" lengthAdjust="spacingAndGlyphs" class="v" style="fill:#2a8a2a">11 611,1</text>

<text x="1553" y="603" textLength="20" lengthAdjust="spacingAndGlyphs" style="font-weight:bold;font-size:12.500px">100</text>
<text x="1552" y="667" style="font-weight:bold;font-size:12.500px">0</text>
<text x="1553" y="636">50</text>
<rect class="pl" x="1550.500" y="631.500" width="36" height="16"/><text x="1552" y="643.500" textLength="33" lengthAdjust="spacingAndGlyphs" class="v">39,206</text>
<rect class="pl" x="1550.500" y="691.500" width="40" height="15"/><text x="1552" y="703.500" textLength="37" lengthAdjust="spacingAndGlyphs" class="v" style="fill:#e86060">-5,0596</text>
<rect class="pl" x="1550.500" y="717.500" width="40" height="15"/><text x="1552" y="729.500" textLength="37" lengthAdjust="spacingAndGlyphs" class="v" style="fill:#e86060">-123,62</text>
<rect class="pl" x="1550.500" y="732.500" width="40" height="15"/><text x="1552" y="744.500" textLength="37" lengthAdjust="spacingAndGlyphs" class="v" style="fill:#4050e8">-128,67</text>
<text x="1552" y="756.500" textLength="22" lengthAdjust="spacingAndGlyphs">-200</text>
<text x="1552" y="794.500" textLength="19" lengthAdjust="spacingAndGlyphs">200</text>
<text x="1552" y="813.500" textLength="19" lengthAdjust="spacingAndGlyphs">100</text>
<text x="1552" y="832.500" style="font-weight:bold;font-size:12.500px">0</text>
<rect class="pl" x="1550.500" y="837.500" width="40" height="14"/><text x="1552" y="849" textLength="37" lengthAdjust="spacingAndGlyphs" class="v">-81,217</text>
<text x="1552" y="872.500" textLength="22" lengthAdjust="spacingAndGlyphs">-200</text>
<text x="1552" y="891.500" textLength="22" lengthAdjust="spacingAndGlyphs">-300</text>
</svg>
</body></html>
